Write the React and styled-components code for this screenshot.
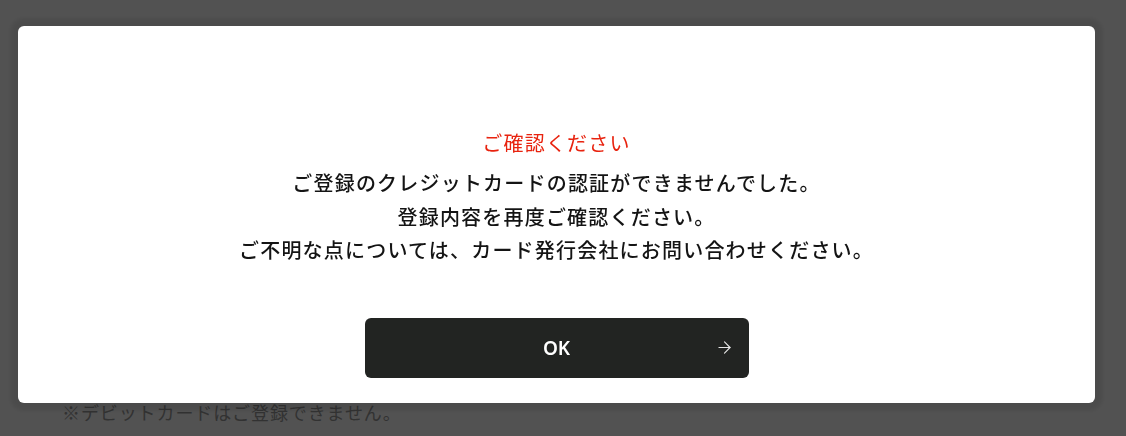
import styled, { createGlobalStyle } from 'styled-components';
import { ArrowRight } from 'lucide-react';

const GlobalStyle = createGlobalStyle`
  html, body {
    margin: 0;
    padding: 0;
    background: #ffffff;
  }
  body {
    font-family: 'Noto Sans CJK JP', 'Noto Sans', sans-serif;
  }
`;

const Page = styled.div`
  height: 436px;
  display: flex;
  flex-direction: column;
  justify-content: flex-end;
  padding: 0 0 11px 62px;
  box-sizing: border-box;
`;

const Note = styled.p`
  margin: 0;
  font-size: 18px;
  letter-spacing: 0.9px;
  line-height: 26px;
  color: #9c9c9c;
`;

const Overlay = styled.div`
  position: fixed;
  inset: 0;
  background: rgba(0, 0, 0, 0.68);
  display: flex;
  align-items: flex-start;
  padding: 26px 31px 0 18px;
`;

const Modal = styled.div`
  flex: 1;
  height: 377px;
  box-sizing: border-box;
  background: #ffffff;
  border-radius: 6px;
  box-shadow: 0 0 4px 8px rgba(0, 0, 0, 0.09);
  padding: 100px 0 25px;
  display: flex;
  flex-direction: column;
  align-items: center;
`;

const Title = styled.h2`
  margin: 0 0 6px;
  font-size: 20px;
  font-weight: 400;
  letter-spacing: 1.2px;
  line-height: 34px;
  color: #e8230f;
`;

const Message = styled.p`
  margin: 0;
  font-size: 20px;
  font-weight: 500;
  letter-spacing: 1.2px;
  line-height: 33.5px;
  color: #141414;
  text-align: center;
`;

const OkButton = styled.button`
  margin-top: 51px;
  width: 384px;
  height: 60px;
  border: none;
  border-radius: 6px;
  background: #222422;
  color: #ffffff;
  display: grid;
  grid-template-columns: 1fr auto 1fr;
  align-items: center;
  padding: 0 15px;
  cursor: pointer;
  font-family: 'Noto Sans', Roboto, sans-serif;
  font-size: 19px;
  font-weight: 600;
`;

const Label = styled.span`
  grid-column: 2;
`;

const Arrow = styled.span`
  grid-column: 3;
  justify-self: end;
  display: flex;
  color: #e6e6e6;
`;

export default function App() {
  return (
    <>
      <GlobalStyle />
      <Page>
        <Note>※デビットカードはご登録できません。</Note>
      </Page>
      <Overlay>
        <Modal>
          <Title>ご確認ください</Title>
          <Message>
            ご登録のクレジットカードの認証ができませんでした。
            <br />
            登録内容を再度ご確認ください。
            <br />
            ご不明な点については、カード発行会社にお問い合わせください。
          </Message>
          <OkButton>
            <Label>OK</Label>
            <Arrow>
              <ArrowRight size={19} strokeWidth={1.4} />
            </Arrow>
          </OkButton>
        </Modal>
      </Overlay>
    </>
  );
}
